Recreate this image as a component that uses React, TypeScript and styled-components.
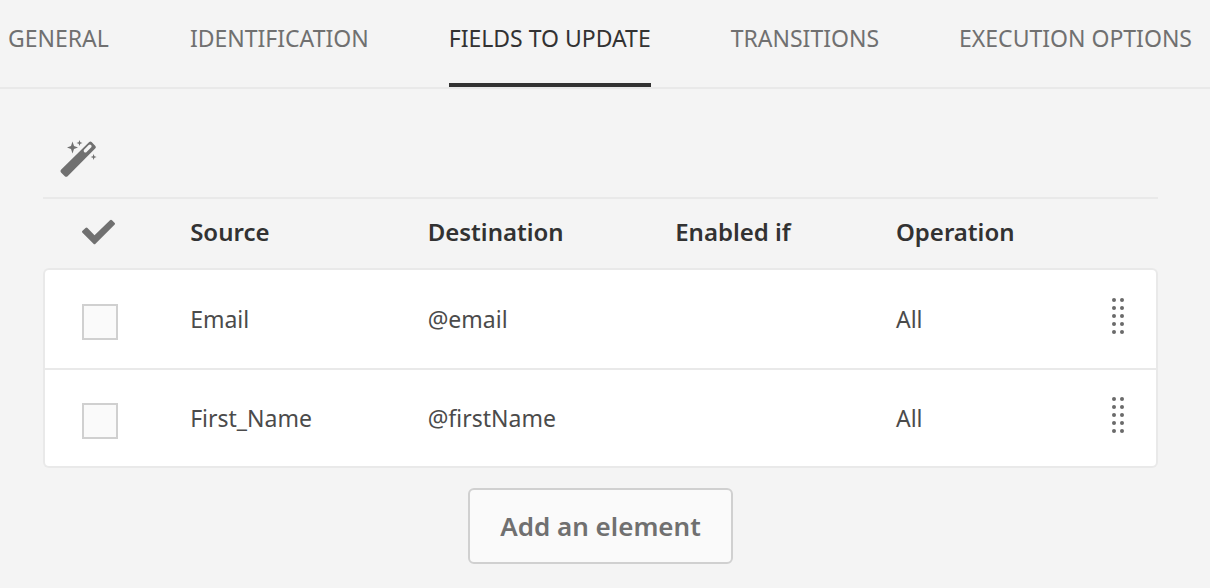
import React from "react";
import styled, { createGlobalStyle } from "styled-components";

const GlobalStyle = createGlobalStyle`
  *, *::before, *::after {
    box-sizing: border-box;
  }

  body {
    margin: 0;
    background: #f4f4f4;
    color: #4b4b4b;
    font-family: "Noto Sans", "Open Sans", sans-serif;
    font-size: 23px;
    line-height: 32px;
  }
`;

const TabBar = styled.nav`
  display: grid;
  grid-template-columns: 104fr 176fr 204fr 148fr 232fr;
  column-gap: 80px;
  padding: 0 18px 0 8px;
  border-bottom: 2px solid #e9e9e9;
`;

const Tab = styled.a<{ $active?: boolean }>`
  padding: 22px 0 29px;
  border-bottom: 4px solid ${(p) => (p.$active ? "#323232" : "transparent")};
  color: ${(p) => (p.$active ? "#323232" : "#707070")};
  text-decoration: none;
  text-transform: uppercase;
  white-space: nowrap;
`;

const Panel = styled.main`
  display: flex;
  flex-direction: column;
  padding: 44px 52px 24px 43px;
`;

const Toolbar = styled.div`
  display: flex;
  height: 66px;
  padding: 6px 16px;
  border-bottom: 2px solid #e9e9e9;
`;

const IconButton = styled.button`
  display: block;
  width: 40px;
  height: 40px;
  padding: 0;
  border: 0;
  background: none;
  color: #707070;
  cursor: pointer;
`;

const Icon = styled.svg`
  display: block;
  fill: currentColor;
`;

const FieldTable = styled.table`
  width: 100%;
  table-layout: fixed;
  border-collapse: separate;
  border-spacing: 0;
`;

const Column = styled.col<{ $share: number }>`
  width: ${(p) => p.$share}%;
`;

const HeaderCell = styled.th`
  height: 69px;
  padding: 0 0 4px;
  color: #323232;
  font-size: 24px;
  font-weight: 600;
  text-align: left;
  white-space: nowrap;
`;

const CheckHeader = styled(HeaderCell)`
  padding-left: 39px;
  color: #707070;
`;

const Cell = styled.td`
  height: 100px;
  padding: 0;
  border-top: 2px solid #e9e9e9;
  background: #ffffff;
  white-space: nowrap;

  &:first-child {
    padding-left: 37px;
    border-left: 2px solid #e9e9e9;
  }

  &:last-child {
    padding-right: 31px;
    border-right: 2px solid #e9e9e9;
  }

  tr:first-child > &:first-child {
    border-top-left-radius: 6px;
  }

  tr:first-child > &:last-child {
    border-top-right-radius: 6px;
  }

  tr:last-child > & {
    border-bottom: 2px solid #e9e9e9;
  }

  tr:last-child > &:first-child {
    border-bottom-left-radius: 6px;
  }

  tr:last-child > &:last-child {
    border-bottom-right-radius: 6px;
  }
`;

const Checkbox = styled.input`
  display: block;
  appearance: none;
  width: 36px;
  height: 36px;
  margin: 5px 0 0;
  border: 2px solid #d0d0d0;
  background: #fafafa;

  &:checked {
    background: #707070;
  }
`;

const DragHandle = styled.button`
  display: block;
  margin: 0 0 6px auto;
  padding: 0;
  border: 0;
  background: none;
  color: #6a6a6a;
  cursor: grab;
`;

const AddButton = styled.button`
  align-self: center;
  margin-top: 20px;
  padding: 18px 30px;
  border: 2px solid #d0d0d0;
  border-radius: 6px;
  background: #fafafa;
  color: #707070;
  font-family: inherit;
  font-size: 26px;
  font-weight: 600;
  line-height: 36px;
  cursor: pointer;
`;

const tabs = ["General", "Identification", "Fields to update", "Transitions", "Execution options"];
const activeTab = "Fields to update";

const fields = [
  { source: "Email", destination: "@email", enabledIf: "", operation: "All" },
  { source: "First_Name", destination: "@firstName", enabledIf: "", operation: "All" },
];

const dotRows = [2, 10, 18, 26, 34];

function WandIcon() {
  return (
    <Icon width="40" height="40" viewBox="0 0 40 40" aria-hidden="true">
      <path
        fillRule="evenodd"
        d="M30.2 3.1 Q31.4 2 32.6 3.1 L36.4 6.9 Q37.4 8 36.4 9.2 L8.6 37.2 Q7.2 38.5 5.8 37.2 L2 33.4 Q0.8 32.1 2 30.8 Z M32 6 Q30.9 5 29.7 6.1 L25.2 10.6 Q24.1 11.8 25.1 12.9 Q26.4 14.1 27.6 13 L32.3 8.3 Q33.2 7.1 32 6 Z"
      />
      <path d="M13.5 2.5 L15 6.9 L19 8.5 L15 10.1 L13.5 14.5 L12 10.1 L8 8.5 L12 6.9 Z" />
      <path d="M20.5 1 L21.3 3.2 L23.5 4 L21.3 4.8 L20.5 7 L19.7 4.8 L17.5 4 L19.7 3.2 Z" />
      <path d="M34.6 15 L35.4 17.2 L37.6 18 L35.4 18.8 L34.6 21 L33.8 18.8 L31.6 18 L33.8 17.2 Z" />
    </Icon>
  );
}

function CheckIcon() {
  return (
    <Icon width="34" height="26" viewBox="0 0 34 26" role="img" aria-label="Selection">
      <path d="M28 1.3 Q29 0.3 30 1.3 L32.5 3.8 Q33.5 4.8 32.5 5.8 L13.5 24.7 Q12.5 25.7 11.5 24.7 L0.5 13.8 Q-0.5 12.8 0.5 11.8 L3.5 9 Q4.5 8 5.5 9 L12.5 16.3 Z" />
    </Icon>
  );
}

function DotsIcon() {
  return (
    <Icon width="14" height="36" viewBox="0 0 14 36" aria-hidden="true">
      {dotRows.map((y) => (
        <React.Fragment key={y}>
          <circle cx="3" cy={y} r="2" />
          <circle cx="11" cy={y} r="2" />
        </React.Fragment>
      ))}
    </Icon>
  );
}

export default function App() {
  return (
    <>
      <GlobalStyle />
      <TabBar aria-label="Activity settings">
        {tabs.map((tab) => (
          <Tab
            key={tab}
            href="#"
            $active={tab === activeTab}
            aria-current={tab === activeTab ? "page" : undefined}
          >
            {tab}
          </Tab>
        ))}
      </TabBar>
      <Panel>
        <Toolbar>
          <IconButton type="button" aria-label="Detect fields">
            <WandIcon />
          </IconButton>
        </Toolbar>
        <FieldTable>
          <colgroup>
            <Column $share={13.2} />
            <Column $share={21.3} />
            <Column $share={22.2} />
            <Column $share={19.8} />
            <Column $share={13.5} />
            <Column $share={10} />
          </colgroup>
          <thead>
            <tr>
              <CheckHeader scope="col">
                <CheckIcon />
              </CheckHeader>
              <HeaderCell scope="col">Source</HeaderCell>
              <HeaderCell scope="col">Destination</HeaderCell>
              <HeaderCell scope="col">Enabled if</HeaderCell>
              <HeaderCell scope="col">Operation</HeaderCell>
              <HeaderCell scope="col" aria-label="Reorder" />
            </tr>
          </thead>
          <tbody>
            {fields.map((field) => (
              <tr key={field.source}>
                <Cell>
                  <Checkbox type="checkbox" aria-label={`Select ${field.source}`} />
                </Cell>
                <Cell>{field.source}</Cell>
                <Cell>{field.destination}</Cell>
                <Cell>{field.enabledIf}</Cell>
                <Cell>{field.operation}</Cell>
                <Cell>
                  <DragHandle type="button" aria-label={`Move ${field.source}`}>
                    <DotsIcon />
                  </DragHandle>
                </Cell>
              </tr>
            ))}
          </tbody>
        </FieldTable>
        <AddButton type="button">Add an element</AddButton>
      </Panel>
    </>
  );
}
